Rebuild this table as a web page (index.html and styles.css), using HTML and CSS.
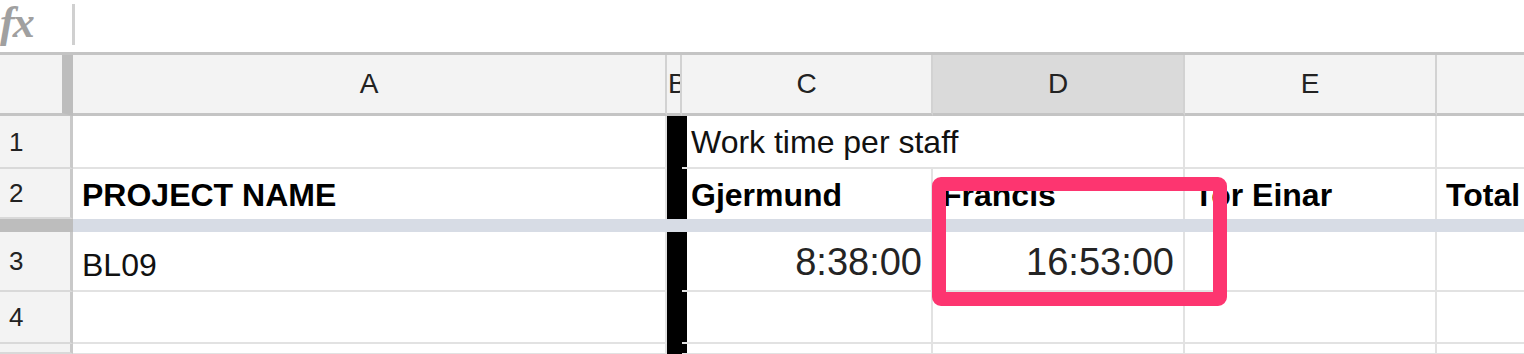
FILE: index.html
```html
<!DOCTYPE html>
<html lang="en">
  <head>
    <meta charset="UTF-8" />
    <meta name="viewport" content="width=device-width, initial-scale=1.0" />
    <title>Work time per staff</title>
    <link rel="stylesheet" href="styles.css">
  </head>
  <body>
    <div class="formula-bar">
      <span class="fx">fx</span>
      <span class="fx-sep"></span>
    </div>

    <div class="sheet">
      <!-- column headers -->
      <div class="corner"></div>
      <div class="col-head">A</div>
      <div class="col-head narrow">B</div>
      <div class="col-head">C</div>
      <div class="col-head selected">D</div>
      <div class="col-head">E</div>
      <div class="col-head"></div>

      <!-- row 1 -->
      <div class="row-head">1</div>
      <div class="cell"></div>
      <div class="cell bar"></div>
      <div class="cell wide">Work time per staff</div>
      <div class="cell"></div>
      <div class="cell"></div>

      <!-- row 2, last frozen row -->
      <div class="row-head">2</div>
      <div class="cell bold">PROJECT NAME</div>
      <div class="cell bar"></div>
      <div class="cell bold">Gjermund</div>
      <div class="cell bold">Francis</div>
      <div class="cell bold">Tor Einar</div>
      <div class="cell bold">Total</div>

      <!-- frozen rows divider -->
      <div class="freeze-head"></div>
      <div class="freeze-line"></div>

      <!-- row 3 -->
      <div class="row-head">3</div>
      <div class="cell">BL09</div>
      <div class="cell bar"></div>
      <div class="cell num">8:38:00</div>
      <div class="cell num">16:53:00</div>
      <div class="cell"></div>
      <div class="cell"></div>

      <!-- row 4 -->
      <div class="row-head">4</div>
      <div class="cell"></div>
      <div class="cell bar"></div>
      <div class="cell"></div>
      <div class="cell"></div>
      <div class="cell"></div>
      <div class="cell"></div>

      <!-- row 5, only its top edge is in view -->
      <div class="row-head"></div>
      <div class="cell"></div>
      <div class="cell bar"></div>
      <div class="cell"></div>
      <div class="cell"></div>
      <div class="cell"></div>
      <div class="cell"></div>
    </div>

    <div class="highlight"></div>
  </body>
</html>
```

FILE: styles.css
```css
body {
  margin: 0;
  width: 1524px;
  height: 354px;
  overflow: hidden;
  position: relative;
  background: #fff;
  font-family: "Liberation Sans", Arial, sans-serif;
  color: #000;
}

.formula-bar {
  display: flex;
  align-items: flex-start;
  height: 52px;
}

.fx {
  width: 72px;
  padding: 1px 0 0 0;
  box-sizing: border-box;
  font-family: "Liberation Serif", serif;
  font-style: italic;
  font-weight: bold;
  font-size: 44px;
  line-height: 1;
  letter-spacing: -2px;
  color: #a0a0a0;
}

.fx-sep {
  width: 3px;
  height: 41px;
  margin-top: 4px;
  background: #d0d0d0;
}

.sheet {
  display: grid;
  grid-template-columns: 73px 594px 15px 251px 252px 252px 1fr;
  grid-template-rows: 61px 53px 50px 13px 60px 52px 10px;
  border-top: 3px solid #c4c4c4;
}

.corner,
.col-head,
.row-head,
.cell {
  box-sizing: border-box;
  display: flex;
  white-space: nowrap;
  line-height: 1;
}

.corner {
  background: #f3f3f3;
  border-right: 11px solid #bdbdbd;
  border-bottom: 3px solid #c4c4c4;
}

.col-head {
  align-items: center;
  justify-content: center;
  background: #f3f3f3;
  border-right: 2px solid #d2d2d2;
  border-bottom: 3px solid #c4c4c4;
  font-size: 28px;
  color: #222;
}

.col-head.narrow {
  justify-content: flex-start;
  padding-left: 1px;
  overflow: hidden;
}

.col-head.selected {
  background: #dadada;
}

.row-head {
  align-items: center;
  padding-left: 9px;
  background: #f3f3f3;
  border-right: 3px solid #c9c9c9;
  border-bottom: 2px solid #d9d9d9;
  font-size: 26px;
  color: #222;
}

.cell {
  align-items: flex-end;
  padding: 0 9px 9px;
  border-right: 2px solid #e2e2e2;
  border-bottom: 2px solid #e2e2e2;
  font-size: 32px;
  color: #111;
}

.cell.wide {
  grid-column: span 2;
}

.cell.bold {
  font-weight: bold;
  color: #000;
  border-bottom: 0;
  padding-bottom: 8px;
}

.cell.num {
  justify-content: flex-end;
  font-size: 38px;
  color: #242424;
}

.cell.bar {
  background: #000;
  border-color: #000;
}

.freeze-head {
  background: #bdbdbd;
}

.freeze-line {
  grid-column: span 6;
  background: #d7dce5;
}

/* callout around the Francis total */
.highlight {
  position: absolute;
  left: 932px;
  top: 177px;
  width: 295px;
  height: 129px;
  box-sizing: border-box;
  border: 14px solid #fd3570;
  border-radius: 9px;
}
```
